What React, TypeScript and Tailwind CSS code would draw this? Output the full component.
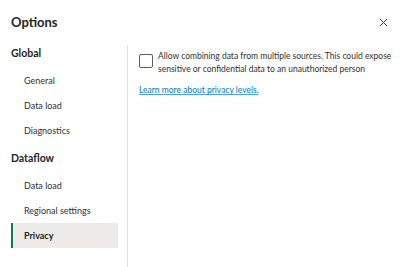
import React from "react";

type NavItem = { label: string; active?: boolean };

const sections: { title: string; items: NavItem[] }[] = [
  {
    title: "Global",
    items: [{ label: "General" }, { label: "Data load" }, { label: "Diagnostics" }],
  },
  {
    title: "Dataflow",
    items: [
      { label: "Data load" },
      { label: "Regional settings" },
      { label: "Privacy", active: true },
    ],
  },
];

function Sidebar() {
  return (
    <nav className="flex w-[118px] shrink-0 flex-col gap-[7px] pl-[11px]">
      {sections.map((section) => (
        <div key={section.title}>
          <p className="mb-[7px] h-[16px] text-[10.5px] font-bold leading-[16px] text-[#252423]">
            {section.title}
          </p>
          <ul className="flex flex-col">
            {section.items.map((item) => (
              <li
                key={item.label}
                className={
                  item.active
                    ? "flex h-[25px] items-center border-l-2 border-[#117865] bg-[#edebe9] pl-[11px] text-[9px] font-bold text-[#252423]"
                    : "flex h-[25px] items-center pl-[13px] text-[9px] text-[#323130]"
                }
              >
                {item.label}
              </li>
            ))}
          </ul>
        </div>
      ))}
    </nav>
  );
}

export default function App() {
  return (
    <div
      className="flex h-[267px] w-[400px] flex-col overflow-hidden bg-white"
      style={{ fontFamily: 'Lato, "Open Sans", sans-serif' }}
    >
      <header className="flex h-[45px] items-center justify-between pl-[11px] pr-[12px]">
        <h1 className="text-[13px] font-bold text-[#252423]">Options</h1>
        <svg width="9" height="9" viewBox="0 0 10 10" className="text-[#323130]">
          <path d="M1 1 L9 9 M9 1 L1 9" stroke="currentColor" strokeWidth="1.1" />
        </svg>
      </header>
      <div className="flex flex-1">
        <Sidebar />
        <div className="ml-[9px] w-px bg-[#e1dfdd]" />
        <main className="flex-1 pl-[11px] pt-[5px]">
          <label className="flex items-start gap-[5px]">
            <span className="mt-[4px] h-[14px] w-[14px] shrink-0 rounded-[2px] border border-[#605e5c] bg-white" />
            <span className="whitespace-nowrap text-[8.5px] leading-[13px] text-[#323130]">
              Allow combining data from multiple sources. This could expose
              <br />
              sensitive or confidential data to an unauthorized person
            </span>
          </label>
          <a className="mt-[8px] block text-[8.5px] text-[#0078d4] underline decoration-[#0078d4]/70">
            Learn more about privacy levels.
          </a>
        </main>
      </div>
    </div>
  );
}
